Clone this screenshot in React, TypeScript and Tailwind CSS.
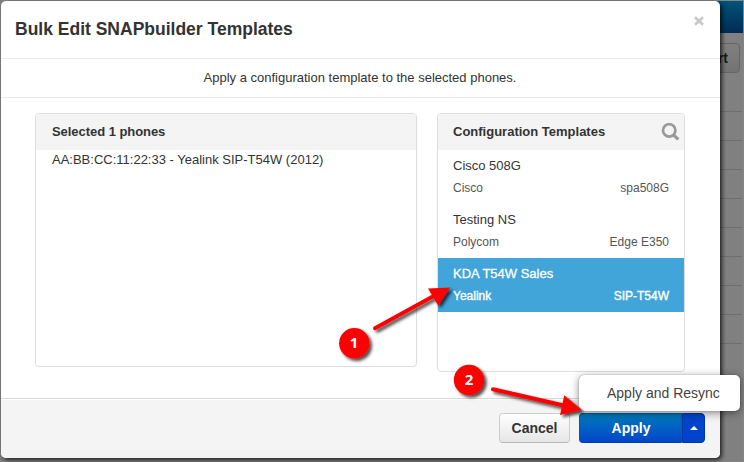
import React from "react";

type Template = { name: string; vendor: string; model: string; selected?: boolean };

const templates: Template[] = [
  { name: "Cisco 508G", vendor: "Cisco", model: "spa508G" },
  { name: "Testing NS", vendor: "Polycom", model: "Edge E350" },
  { name: "KDA T54W Sales", vendor: "Yealink", model: "SIP-T54W", selected: true },
];

function PageBehind() {
  return (
    <div className="absolute inset-y-0 right-0 w-[30px] overflow-hidden border-y border-r border-[#858585] bg-[#808080]">
      <div className="h-8 bg-gradient-to-b from-[#005478] to-[#002c55]" />
      <div className="mt-[10px] flex h-[30px] w-[26px] items-center justify-end rounded-r border border-[#656565] bg-gradient-to-b from-[#808080] to-[#737373] pr-[11px] text-sm font-bold text-[#1a1a1a]">
        rt
      </div>
      <div className="mt-[38px] mr-px">
        {Array.from({ length: 9 }, (_, i) => (
          <div key={i} className="h-[29px] border-t border-[#6f6f6f] last:h-px" />
        ))}
      </div>
    </div>
  );
}

function TemplateRow({ name, vendor, model, selected }: Template) {
  return (
    <li
      className={
        selected
          ? "h-[54px] bg-[#41a5da] px-[15px] pt-[6px] text-white"
          : "h-[54px] px-[15px] pt-[6px] text-[#333]"
      }
    >
      <div className={selected ? "text-[13px] leading-5 [-webkit-text-stroke:0.3px_white]" : "text-[13px] leading-5"}>{name}</div>
      <div
        className={
          selected
            ? "mt-[2px] flex justify-between text-xs leading-5 [-webkit-text-stroke:0.35px_white]"
            : "mt-[2px] flex justify-between text-xs leading-5 text-[#555]"
        }
      >
        <span>{vendor}</span>
        <span>{model}</span>
      </div>
    </li>
  );
}

function Annotations() {
  return (
    <svg className="pointer-events-none absolute inset-0" width="744" height="462" viewBox="0 0 744 462">
      <defs>
        <filter id="shadow" x="-30%" y="-30%" width="170%" height="170%">
          <feDropShadow dx="2.5" dy="2.5" stdDeviation="1.5" floodColor="#000" floodOpacity="0.7" />
        </filter>
      </defs>
      <g filter="url(#shadow)" fill="#f00" stroke="#f00">
        <path d="M375 328.2 436 294.8" strokeWidth="4" strokeLinecap="round" />
        <path d="M450.3 287.6 428 288.5 438.3 305.8Z" stroke="none" />
        <path d="M493 389.2 566 406" strokeWidth="4" strokeLinecap="round" />
        <path d="M582 410 564.3 395.3 560 415Z" stroke="none" />
      </g>
      <g filter="url(#shadow)" fill="#f00">
        <circle cx="354.3" cy="343.2" r="15.2" />
        <circle cx="469" cy="380" r="15.2" />
      </g>
      <g fill="#fff" className="text-[15px] font-bold [font-family:'Open_Sans',sans-serif]" textAnchor="middle">
        <text x="354" y="348">1</text>
        <text x="469" y="385">2</text>
      </g>
    </svg>
  );
}

export default function App() {
  return (
    <div className="relative h-[462px] w-[744px] overflow-hidden bg-[#808080] pt-px pl-px text-[#333] [font-family:'Liberation_Sans',Arial,sans-serif]">
      <PageBehind />
      <div className="relative flex h-[457px] w-[719px] flex-col overflow-hidden rounded-[5px] bg-white shadow-[2px_2px_4px_rgba(0,0,0,0.75)]">
        <header className="flex h-[58px] shrink-0 items-start justify-between border-b border-[#e9e9e9] pr-[15px] pl-[14px]">
          <h1 className="mt-[14px] text-[17.5px] leading-7 font-bold">Bulk Edit SNAPbuilder Templates</h1>
          <svg className="mt-[15px]" width="12" height="11" viewBox="0 0 12 11">
            <path d="m2 1.2 8 7.6m0-7.6-8 7.6" stroke="#c9c9c9" strokeWidth="2.7" />
          </svg>
        </header>
        <p className="flex h-[39px] shrink-0 items-center justify-center border-b border-[#e9e9e9] pr-px text-[13px]">
          Apply a configuration template to the selected phones.
        </p>
        <main className="flex h-[300px] shrink-0 items-start gap-[20px] pt-[15px] pl-[34px]">
          <section className="h-[254px] w-[382px] overflow-hidden rounded border border-[#ddd]">
            <h2 className="flex h-[36px] items-center bg-[#f4f4f4] pl-4 text-[13px] font-bold tracking-[-0.05px]">Selected 1 phones</h2>
            <p className="pl-4 text-[13px] leading-5">AA:BB:CC:11:22:33 - Yealink SIP-T54W (2012)</p>
          </section>
          <section className="h-[259px] w-[248px] overflow-hidden rounded border border-[#ddd]">
            <div className="flex h-[36px] items-center justify-between bg-[#f4f4f4] pr-[4px] pl-[15px]">
              <h2 className="text-[13px] font-bold">Configuration Templates</h2>
              <svg width="19" height="19" viewBox="0 0 19 19" fill="none" stroke="#999">
                <circle cx="8.2" cy="7.4" r="6.2" strokeWidth="2.7" />
                <path d="m12.4 11.8 4.9 4.6" strokeWidth="3.2" />
              </svg>
            </div>
            <ul>
              {templates.map((t) => (
                <TemplateRow key={t.name} {...t} />
              ))}
            </ul>
          </section>
        </main>
        <footer className="flex flex-1 items-start justify-end border-t border-[#d8d8d8] bg-[#f4f4f4] pt-[14px] pr-[15px] text-sm font-bold shadow-[inset_0_1px_0_white]">
          <button className="mr-[9px] h-[30px] w-[71px] rounded border border-[#ccc] border-b-[#b8b8b8] bg-gradient-to-b from-white to-[#e6e6e6]">
            Cancel
          </button>
          <button className="h-[30px] w-[103px] rounded-l border border-[#0058b4] border-b-[#0040a0] bg-gradient-to-b from-[#0078b8] to-[#0044cc] pl-px text-white">
            Apply
          </button>
          <button className="flex h-[30px] w-[23px] items-center justify-center rounded-r border border-[#0037a4] bg-[#0044cc]">
            <span className="border-x-4 border-b-4 border-x-transparent border-b-white" />
          </button>
        </footer>
      </div>
      <div className="absolute top-[375px] left-[579px] flex h-[36px] w-[161px] items-center rounded-[5px] bg-white pl-7 text-sm text-[#444] shadow-[0_2px_9px_rgba(0,0,0,0.45),0_0_1px_rgba(0,0,0,0.6)]">
        Apply and Resync
      </div>
      <Annotations />
    </div>
  );
}
